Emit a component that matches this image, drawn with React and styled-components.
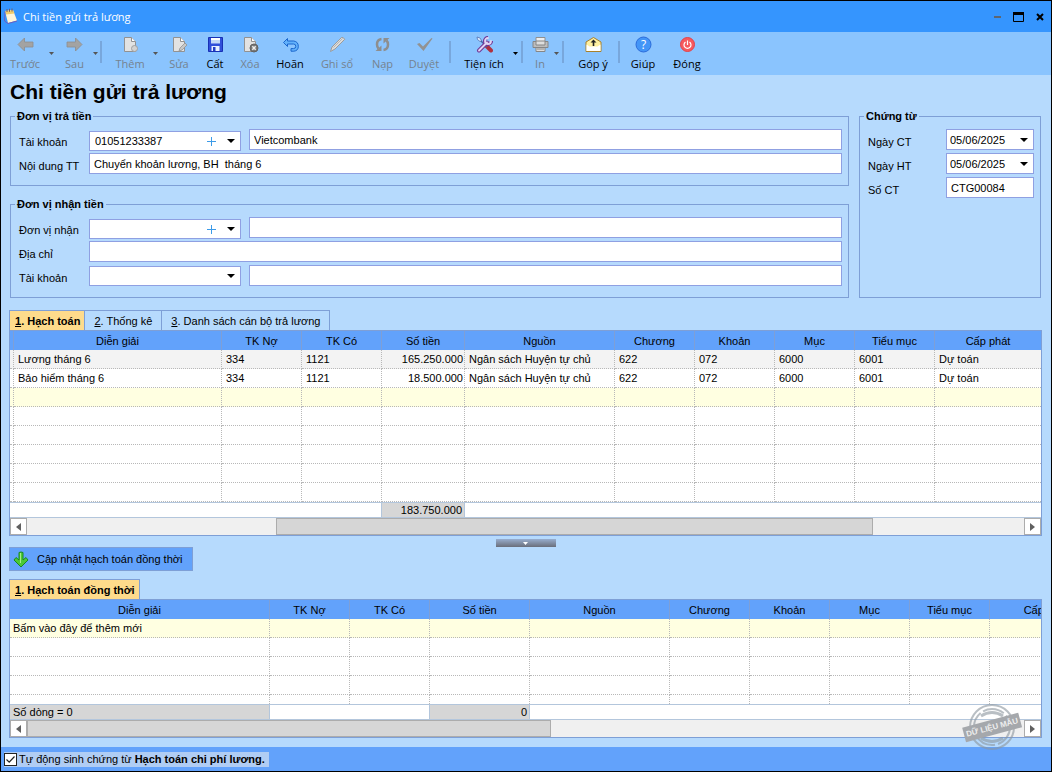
import React from 'react';
import styled, { createGlobalStyle } from 'styled-components';

const GlobalStyle = createGlobalStyle`
  * {
    box-sizing: border-box;
  }
  body {
    margin: 0;
    background: #000;
    font-family: 'Liberation Sans', Arial, sans-serif;
    font-size: 11px;
    color: #000;
  }
  button, input, select {
    font: inherit;
    color: inherit;
  }
`;

// Window frame
const Window = styled.div`
  display: flex;
  flex-direction: column;
  min-height: 100vh;
  border: 1px solid #000;
  background: #b6dafd;
`;

const TitleBar = styled.header`
  display: flex;
  align-items: center;
  gap: 5px;
  height: 31px;
  padding: 0 4px 0 2px;
  background: #3595fe;
  color: #fff;
  font-family: 'Open Sans', 'Noto Sans', sans-serif;
`;

const TitleText = styled.span`
  flex: 1;
`;

const CaptionButton = styled.button`
  display: flex;
  padding: 0;
  margin-left: 3px;
  border: 0;
  background: none;
`;

// Toolbar
const Toolbar = styled.nav`
  display: flex;
  height: 43px;
  padding: 0 4px;
  background: #8ac4fe;
  font-family: 'Open Sans', 'Noto Sans', sans-serif;
`;

const ToolButton = styled.button`
  display: flex;
  flex-direction: column;
  align-items: center;
  gap: 2px;
  width: ${props => props.$width}px;
  padding: 4px 0 0;
  border: 0;
  background: none;
  color: ${props => (props.disabled ? '#75828f' : '#000')};
  line-height: 18px;
  white-space: nowrap;
`;

const ToolArrow = styled.button`
  display: flex;
  align-items: center;
  justify-content: center;
  width: ${props => props.$width}px;
  padding: 0;
  border: 0;
  background: none;
  color: ${props => (props.disabled ? '#555' : '#000')};
`;

const Separator = styled.div`
  width: 2px;
  height: 22px;
  margin: 9px ${props => props.$gap}px 0 2px;
  background: #78a7dc;
`;

// Form area
const Body = styled.main`
  display: flex;
  flex: 1;
  flex-direction: column;
  padding: 0 9px 0 8px;
`;

const Heading = styled.h1`
  margin: 0;
  padding: 3px 1px 2px;
  font-size: 21px;
  line-height: 28px;
`;

const FormArea = styled.div`
  display: grid;
  grid-template-columns: 1fr 182px;
  gap: 10px;
  padding: 0 1px;
`;

const FormColumn = styled.div`
  display: flex;
  flex-direction: column;
  gap: 10px;
`;

const Group = styled.fieldset`
  flex: 1;
  min-width: 0;
  margin: 0;
  padding: 5px 6px 8px 8px;
  border: 1px solid #7e9fd6;
`;

const Legend = styled.legend`
  margin-left: -4px;
  padding: 0 2px;
  font-weight: bold;
  line-height: 16px;
`;

const FieldRow = styled.div`
  display: grid;
  grid-template-columns: ${props => props.$columns || '70px 152px 1fr'};
  height: 24px;
`;

const Label = styled.label`
  padding-top: 5px;
  line-height: 16px;
  white-space: nowrap;
`;

const TextBox = styled.input`
  min-width: 0;
  width: 100%;
  height: 21px;
  padding: 0 4px;
  border: 1px solid #8fa0e2;
  border-radius: 0;
  background: #fff;
  outline: 0;
`;

const WideBox = styled.div`
  margin-left: ${props => (props.$full ? 0 : 8)}px;
  grid-column: ${props => (props.$full ? '2 / -1' : 'auto')};
`;

const Combo = styled.div`
  display: flex;
  align-items: center;
  height: ${props => props.$height || 20}px;
  margin-top: ${props => props.$top || 0}px;
  border: 1px solid #8fa0e2;
  background: #fff;
`;

const ComboSelect = styled.select`
  flex: 1;
  min-width: 0;
  height: 100%;
  padding: 0 0 0 ${props => props.$indent || 5}px;
  border: 0;
  background: none;
  appearance: none;
  outline: 0;
`;

const AddButton = styled.button`
  display: flex;
  padding: 0 11px 0 0;
  border: 0;
  background: none;
`;

const ComboArrow = styled.span`
  display: flex;
  padding-right: 5px;
  pointer-events: none;
`;

// Tabs
const Tabs = styled.div`
  display: flex;
  height: 20px;
  margin-top: ${props => props.$top}px;
`;

const Tab = styled.button`
  height: 20px;
  padding: 0 ${props => (props.$active ? 4 : 9)}px 0 ${props => (props.$active ? 5 : 9)}px;
  border: 1px solid #7e9fd6;
  border-bottom: 0;
  border-left-width: ${props => (props.$active ? 1 : 0)}px;
  background: ${props => (props.$active ? '#fedb8b' : '#b6dafd')};
  font-weight: ${props => (props.$active ? 'bold' : 'normal')};
  white-space: nowrap;
`;

// Data grids
const GridFrame = styled.section`
  overflow: hidden;
  border: 1px solid #7e9fd6;
  border-top: 0;
  background: #fff;
`;

const GridClip = styled.div`
  height: ${props => props.$height}px;
  overflow: hidden;
`;

const Table = styled.table`
  width: ${props => (props.$width ? `${props.$width}px` : '100%')};
  border-collapse: separate;
  border-spacing: 0;
  table-layout: fixed;
`;

const HeadCell = styled.th`
  height: 20px;
  padding: 0;
  border-top: 1px solid #7e9fd6;
  border-right: 1px solid #7e9fd6;
  background: #62a2fb;
  font-weight: normal;
  line-height: 16px;
  overflow: hidden;
  white-space: nowrap;

  &:last-child {
    border-right: 0;
  }
`;

const Row = styled.tr`
  background: ${props => props.$tone || '#fff'};
`;

const Cell = styled.td`
  height: 19px;
  padding: 0 ${props => (props.$end ? 1 : 0)}px 0 ${props => (props.$pad ? 4 : 3)}px;
  border-right: 1px dotted #b8b8b8;
  border-bottom: 1px dotted #b8b8b8;
  line-height: 16px;
  overflow: hidden;
  text-align: ${props => (props.$end ? 'right' : 'left')};
  white-space: nowrap;

  &:last-child {
    border-right: 0;
  }
`;

const GapCell = styled(Cell)`
  padding: 0;
`;

const Summary = styled.div`
  display: flex;
  height: 16px;
  border-top: 1px solid #b3c6dc;
  border-bottom: 1px solid #b3c6dc;
`;

const SummaryCell = styled.div`
  flex: none;
  width: ${props => props.$width}px;
  padding: 0 2px 0 3px;
  border-right: 1px solid #b3c6dc;
  background: ${props => (props.$filled ? '#d6d6d6' : '#fff')};
  line-height: 14px;
  text-align: ${props => (props.$end ? 'right' : 'left')};
`;

const ScrollTrack = styled.div`
  display: flex;
  height: 17px;
  background: #f0f0f0;
`;

const ScrollButton = styled.button`
  display: flex;
  align-items: center;
  justify-content: center;
  width: 17px;
  padding: 0;
  border: 1px solid #acacac;
  background: #fff;
`;

const ScrollRail = styled.div`
  display: grid;
  flex: 1;
  grid-template-columns: ${props => props.$columns};
`;

const ScrollThumb = styled.div`
  grid-column: 2;
  border: 1px solid #acacac;
  background: #d6d6d6;
`;

const Splitter = styled.div`
  display: flex;
  align-items: center;
  justify-content: center;
  width: 60px;
  height: 8px;
  margin: 3px auto 0;
  background: linear-gradient(#98aecf, #6a6e7a);
`;

const UpdateButton = styled.button`
  display: flex;
  align-items: center;
  align-self: flex-start;
  gap: 8px;
  height: 24px;
  padding: 0 10px 0 3px;
  border: 1px solid #7e9fd6;
  background: #62a2fb;
`;

// Sample data stamp over the lower grid
const LowerGrid = styled.div`
  position: relative;
`;

const Stamp = styled.svg`
  position: absolute;
  right: 18px;
  bottom: -14px;
  pointer-events: none;
`;

const StatusBar = styled.footer`
  display: flex;
  align-items: center;
  height: 24px;
  padding-left: 3px;
  background: #62a2fb;
`;

const AutoCheck = styled.label`
  display: flex;
  align-items: center;
  gap: 2px;
  height: 15px;
  padding-right: 4px;
  background: #b0cdf4;
  white-space: pre;
`;

const CheckInput = styled.input`
  width: 13px;
  height: 13px;
  margin: 0;
  appearance: none;
  border: 1px solid #222;
  background: #fff;

  &:checked {
    background: #fff url("data:image/svg+xml,%3Csvg xmlns='http://www.w3.org/2000/svg' viewBox='0 0 11 11'%3E%3Cpath d='M1.5 5.5l2.700 2.700L9.500 2.500' fill='none' stroke='%23222' stroke-width='1.200'/%3E%3C/svg%3E") center / 11px no-repeat;
  }
`;

const Caret = () => (
  <svg width="8" height="4" viewBox="0 0 8 4">
    <path d="M0 0h8L4 4z" fill="#000" />
  </svg>
);

const SmallCaret = () => (
  <svg width="5" height="3" viewBox="0 0 5 3">
    <path d="M0 0h5L2.500 3z" fill="currentColor" />
  </svg>
);

const Page = () => (
  <>
    <path d="M2.500 1.500h7l4 4v10h-11z" fill="#e2e2e2" stroke="#929292" />
    <path d="M9.500 1.500v4h4" fill="#fff" stroke="#929292" />
  </>
);

const icons = {
  back: <path d="M1 8.500L7.500 2v4H16v5H7.500v4z" fill="#a3a3a3" stroke="#8d8d8d" strokeWidth=".8" />,
  next: <path d="M16 8.500L9.500 2v4H1v5h8.500v4z" fill="#a3a3a3" stroke="#8d8d8d" strokeWidth=".8" />,
  add: <><Page /><circle cx="12.500" cy="12.500" r="3" fill="#d2d2d2" stroke="#a0a0a0" /></>,
  edit: <><Page /><path d="M8 15l1-3 5-5 2 2-5 5z" fill="#c8c8c8" stroke="#929292" strokeWidth=".8" /></>,
  save: <><path d="M1.500 1.500h14v14h-14z" fill="#304fd9" stroke="#1831b5" /><path d="M4 2h9v5.500H4z" fill="#c3d9f7" /><path d="M4 2h9v2H4z" fill="#fff" /><path d="M4.500 10h8v5h-8z" fill="#e8f1ff" /><path d="M6 11h2.500v4H6z" fill="#2440c6" /></>,
  remove: <><Page /><circle cx="12" cy="12" r="4" fill="#777" stroke="#626262" /><path d="M10.300 10.300l3.400 3.400m0-3.400l-3.400 3.400" stroke="#eee" strokeWidth="1.500" /></>,
  undo: <path d="M5.500 2.500L1.500 6.500l4 4V8h6q2.300 0 2.300 2.300t-2.300 2.300H9v2.600h2.800q4.500-.4 4.500-4.900T11.800 5H5.500z" fill="#62b1fb" stroke="#1b66cd" />,
  write: <><path d="M1.500 15.500l1.500-4.500L12.500 1.500q2-.5 3.200 1.800L6 13z" fill="#dcdcdc" stroke="#9b9b9b" /><path d="M4.500 11.500l9-9" stroke="#b5b5b5" /></>,
  reload: <><path d="M7.500 3Q3 3.500 3 8.500q0 2.500 1.500 4M9.500 14q4.500-.5 4.500-5.500 0-2.500-1.500-4" fill="none" stroke="#8e8e8e" strokeWidth="2.500" /><path d="M1.500 15h6V9.500zM15.500 2h-6v5.500z" fill="#8e8e8e" /></>,
  approve: <path d="M1 8l2.500-1L7 10.500 15.500 2l1 .5L7.500 15z" fill="#929292" />,
  tools: <><path d="M11 10.500l4 4" stroke="#b0303f" strokeWidth="4" strokeLinecap="round" /><path d="M3 3l8 8" stroke="#4262a5" strokeWidth="1.500" /><path d="M1 1l3 1 1.500 2.500L4 5.500l-2.500-2z" fill="#dcecff" stroke="#4864aa" strokeWidth=".7" /><path d="M3 14.500l8-8" stroke="#713997" strokeWidth="4" strokeLinecap="round" /><path d="M15.500 5A3.500 3.500 0 1112 1.500" fill="none" stroke="#713997" strokeWidth="3.200" /><path d="M3 14.500l8-8M15 5a3 3 0 11-3-3" fill="none" stroke="#e2d5f4" strokeWidth="1.800" strokeLinecap="round" /></>,
  print: <><path d="M4 1.500h9V6H4z" fill="#eee" stroke="#909090" /><path d="M1 5.500h15v6H1z" fill="#bcbcbc" stroke="#868686" /><path d="M4 5h9v4H4zM4 11.500h9v4H4z" fill="#dedede" stroke="#868686" /><path d="M5 13h7" stroke="#888" /></>,
  feedback: <><path d="M1 6l7.500-4.500L16 6v9.500H1z" fill="#fff0a0" stroke="#a8812c" /><path d="M1.500 8.500l3 2h8l3-2V15h-14z" fill="#fff" /><path d="M8.500 3.500l3 3H9.300V10H7.700V6.500H5.500z" fill="#222" /></>,
  help: <><circle cx="8.500" cy="8.500" r="7.500" fill="#4395f7" stroke="#2c6cda" /><text x="8.500" y="13" textAnchor="middle" fontSize="12" fill="#fff">?</text></>,
  close: <><circle cx="8.500" cy="8.500" r="7" fill="#f6595d" stroke="#e34249" /><path d="M6.500 6a3.500 3.500 0 104 0M8.500 4.500V9" fill="none" stroke="#fff" strokeWidth="1.200" /></>,
};

const ToolIcon = ({ name }) => (
  <svg width="17" height="17" viewBox="0 0 17 17">{icons[name]}</svg>
);

const NoteIcon = () => (
  <svg width="15" height="17" viewBox="0 0 15 17">
    <path d="M2 3l8-1 4 10.500-9 2.500z" fill="#fff5d8" />
    <path d="M2 3l8-1 1.500 3.500-8.500 1z" fill="#f1cd6b" />
    <path d="M2 3.500L1.500 13l3.500 2.500L14 13" fill="none" stroke="#6a5fc0" />
    <path d="M4 1v3M6.500 .8v3M9 .5v3" stroke="#705b69" />
  </svg>
);

const tools = [
  { icon: 'back', label: 'Trước', width: 40, disabled: true, arrow: 12 },
  { icon: 'next', label: 'Sau', width: 35, disabled: true, arrow: 6, separator: 6 },
  { icon: 'add', label: 'Thêm', width: 44, disabled: true, arrow: 6 },
  { icon: 'edit', label: 'Sửa', width: 42, disabled: true },
  { icon: 'save', label: 'Cất', width: 30 },
  { icon: 'remove', label: 'Xóa', width: 40, disabled: true },
  { icon: 'undo', label: 'Hoãn', width: 40 },
  { icon: 'write', label: 'Ghi sổ', width: 54, disabled: true },
  { icon: 'reload', label: 'Nạp', width: 37, disabled: true },
  { icon: 'approve', label: 'Duyệt', width: 46, disabled: true, separator: 5 },
  { icon: 'tools', label: 'Tiện ích', width: 56, arrow: 7, separator: 4 },
  { icon: 'print', label: 'In', width: 26, disabled: true, arrow: 7, separator: 6 },
  { icon: 'feedback', label: 'Góp ý', width: 46, separator: 3 },
  { icon: 'help', label: 'Giúp', width: 40 },
  { icon: 'close', label: 'Đóng', width: 48 },
];

const titles = ['Diễn giải', 'TK Nợ', 'TK Có', 'Số tiền', 'Nguồn', 'Chương', 'Khoản', 'Mục', 'Tiểu mục', 'Cấp phát'];

const entries = [
  ['Lương tháng 6', '334', '1121', '165.250.000', 'Ngân sách Huyện tự chủ', '622', '072', '6000', '6001', 'Dự toán'],
  ['Bảo hiểm tháng 6', '334', '1121', '18.500.000', 'Ngân sách Huyện tự chủ', '622', '072', '6000', '6001', 'Dự toán'],
  [], [], [], [], [], [],
];

const entryTones = ['#f3f3f3', '#fff', '#ffffe1'];
const entryWidths = [208, 80, 80, 83, 150, 80, 80, 80, 80];

const extraRows = [['Bấm vào đây để thêm mới'], [], [], [], []];
const extraWidths = [260, 80, 80, 100, 140, 80, 80, 80, 80, 112];

const ScrollBar = ({ columns }) => (
  <ScrollTrack>
    <ScrollButton aria-label="Cuộn trái">
      <svg width="5" height="8"><path d="M5 0v8L0 4z" fill="#606060" /></svg>
    </ScrollButton>
    <ScrollRail $columns={columns}><ScrollThumb /></ScrollRail>
    <ScrollButton aria-label="Cuộn phải">
      <svg width="5" height="8"><path d="M0 0v8l5-4z" fill="#606060" /></svg>
    </ScrollButton>
  </ScrollTrack>
);

const ComboField = ({ id, value = '', add, top, height, indent }) => (
  <Combo $top={top} $height={height}>
    <ComboSelect id={id} defaultValue={value} $indent={indent}>
      <option value={value}>{value}</option>
    </ComboSelect>
    {add && (
      <AddButton aria-label="Thêm mới">
        <svg width="9" height="9"><path d="M4.500 0v9M0 4.500h9" stroke="#3c9be8" /></svg>
      </AddButton>
    )}
    <ComboArrow><Caret /></ComboArrow>
  </Combo>
);

const App = () => (
  <>
    <GlobalStyle />
    <Window>
      <TitleBar>
        <NoteIcon />
        <TitleText>Chi tiền gửi trả lương</TitleText>
        <CaptionButton aria-label="Thu nhỏ">
          <svg width="15" height="12"><path d="M4 6h7" stroke="#5d6570" strokeWidth="2" /></svg>
        </CaptionButton>
        <CaptionButton aria-label="Phóng to">
          <svg width="11" height="10"><path d="M.5 1h10v8.500H.5z" fill="none" stroke="#000" /><path d="M0 1.500h11" stroke="#000" strokeWidth="3" /></svg>
        </CaptionButton>
        <CaptionButton aria-label="Đóng">
          <svg width="15" height="8"><path d="M5 1l6 6m0-6L5 7" stroke="#000" strokeWidth="2" /></svg>
        </CaptionButton>
      </TitleBar>
      <Toolbar>
        {tools.map(tool => (
          <React.Fragment key={tool.icon}>
            <ToolButton $width={tool.width} disabled={tool.disabled}>
              <ToolIcon name={tool.icon} />
              {tool.label}
            </ToolButton>
            {tool.arrow && (
              <ToolArrow $width={tool.arrow} disabled={tool.disabled} aria-label={tool.label}>
                <SmallCaret />
              </ToolArrow>
            )}
            {tool.separator && <Separator $gap={tool.separator} />}
          </React.Fragment>
        ))}
      </Toolbar>
      <Body>
        <Heading>Chi tiền gửi trả lương</Heading>
        <FormArea>
          <FormColumn>
            <Group>
              <Legend>Đơn vị trả tiền</Legend>
              <FieldRow>
                <Label htmlFor="payAccount">Tài khoản</Label>
                <ComboField id="payAccount" value="01051233387" add top={2} />
                <WideBox><TextBox aria-label="Ngân hàng" defaultValue="Vietcombank" /></WideBox>
              </FieldRow>
              <FieldRow>
                <Label htmlFor="payNote">Nội dung TT</Label>
                <WideBox $full><TextBox id="payNote" defaultValue="Chuyển khoản lương, BH  tháng 6" /></WideBox>
              </FieldRow>
            </Group>
            <Group>
              <Legend>Đơn vị nhận tiền</Legend>
              <FieldRow>
                <Label htmlFor="receiver">Đơn vị nhận</Label>
                <ComboField id="receiver" add top={2} />
                <WideBox><TextBox aria-label="Tên đơn vị nhận" /></WideBox>
              </FieldRow>
              <FieldRow>
                <Label htmlFor="address">Địa chỉ</Label>
                <WideBox $full><TextBox id="address" /></WideBox>
              </FieldRow>
              <FieldRow>
                <Label htmlFor="receiverAccount">Tài khoản</Label>
                <ComboField id="receiverAccount" top={1} />
                <WideBox><TextBox aria-label="Ngân hàng nhận" /></WideBox>
              </FieldRow>
            </Group>
          </FormColumn>
          <Group>
            <Legend>Chứng từ</Legend>
            <FieldRow $columns="1fr 88px">
              <Label htmlFor="docDate">Ngày CT</Label>
              <ComboField id="docDate" value="05/06/2025" height={21} indent={3} />
            </FieldRow>
            <FieldRow $columns="1fr 88px">
              <Label htmlFor="postDate">Ngày HT</Label>
              <ComboField id="postDate" value="05/06/2025" height={21} indent={3} />
            </FieldRow>
            <FieldRow $columns="1fr 88px">
              <Label htmlFor="docNumber">Số CT</Label>
              <TextBox id="docNumber" defaultValue="CTG00084" />
            </FieldRow>
          </Group>
        </FormArea>
        <Tabs $top={12}>
          <Tab $active><u>1</u>. Hạch toán</Tab>
          <Tab><u>2</u>. Thống kê</Tab>
          <Tab><u>3</u>. Danh sách cán bộ trả lương</Tab>
        </Tabs>
        <GridFrame>
          <Table>
            <colgroup>
              <col width="4" />
              {entryWidths.map((width, i) => <col key={i} width={width} />)}
              <col />
            </colgroup>
            <thead>
              <tr>
                <HeadCell />
                {titles.map(title => <HeadCell key={title}>{title}</HeadCell>)}
              </tr>
            </thead>
            <tbody>
              {entries.map((entry, i) => (
                <Row key={i} $tone={entryTones[i]}>
                  <GapCell />
                  {titles.map((title, j) => <Cell key={title} $pad $end={j === 3}>{entry[j]}</Cell>)}
                </Row>
              ))}
            </tbody>
          </Table>
          <Summary>
            <SummaryCell $width={372} />
            <SummaryCell $width={83} $filled $end>183.750.000</SummaryCell>
          </Summary>
          <ScrollBar columns="249fr 597fr 151fr" />
        </GridFrame>
        <Splitter>
          <svg width="5" height="3"><path d="M0 0h5L2.500 3z" fill="#fff" /></svg>
        </Splitter>
        <UpdateButton>
          <svg width="16" height="17" viewBox="0 0 16 17">
            <path d="M6 1.500q2-1 4 0V9l3-2.500 2 2.500-7 7-7-7 2-2.500L6 9z" fill="#4cc936" stroke="#188a21" />
            <path d="M7.500 2v10" stroke="#a4ee8a" />
          </svg>
          Cập nhật hạch toán đồng thời
        </UpdateButton>
        <Tabs $top={8}>
          <Tab $active><u>1</u>. Hạch toán đồng thời</Tab>
        </Tabs>
        <LowerGrid>
          <GridFrame>
            <GridClip $height={105}>
              <Table $width={1092}>
                <colgroup>
                  {extraWidths.map((width, i) => <col key={i} width={width} />)}
                </colgroup>
                <thead>
                  <tr>{titles.map(title => <HeadCell key={title}>{title}</HeadCell>)}</tr>
                </thead>
                <tbody>
                  {extraRows.map((row, i) => (
                    <Row key={i} $tone={i === 0 ? '#ffffe1' : '#fff'}>
                      {titles.map((title, j) => <Cell key={title}>{row[j]}</Cell>)}
                    </Row>
                  ))}
                </tbody>
              </Table>
            </GridClip>
            <Summary>
              <SummaryCell $width={260} $filled>Số dòng = 0</SummaryCell>
              <SummaryCell $width={160} />
              <SummaryCell $width={100} $filled $end>0</SummaryCell>
            </Summary>
            <ScrollBar columns="0fr 524fr 473fr" />
          </GridFrame>
          <Stamp width="62" height="50" viewBox="0 0 62 50">
            <g fill="none" stroke="#8c969e" opacity=".6">
              <circle cx="30" cy="25" r="22" strokeWidth="2" />
              <circle cx="30" cy="25" r="18" strokeWidth="2" strokeDasharray="22 3" />
              <path d="M19 14q11-7 22 0M19 36q11 7 22 0" strokeWidth="3" />
            </g>
            <g transform="rotate(-15 30 25)">
              <path d="M1 18h58v15H1z" fill="#a5a8ac" />
              <text x="30" y="28" textAnchor="middle" fontSize="8" fontWeight="bold" fill="#eee">DỮ LIỆU MẪU</text>
            </g>
          </Stamp>
        </LowerGrid>
      </Body>
      <StatusBar>
        <AutoCheck>
          <CheckInput type="checkbox" defaultChecked />
          <span>Tự động sinh chứng từ <b>Hạch toán chi phí lương.</b></span>
        </AutoCheck>
      </StatusBar>
    </Window>
  </>
);

export default App;
